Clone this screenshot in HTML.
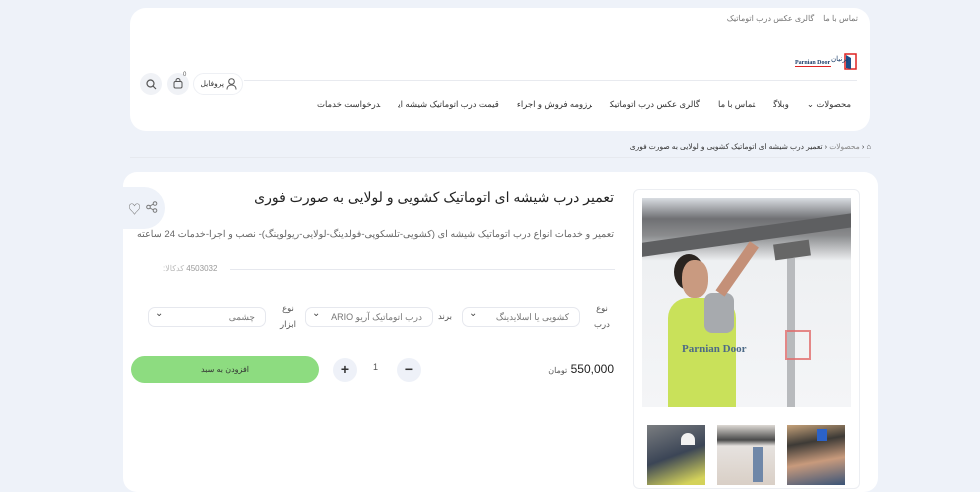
<!DOCTYPE html>
<html lang="fa" dir="rtl"><head><meta charset="utf-8">
<style>
*{box-sizing:border-box;margin:0;padding:0}
body{width:980px;height:480px;overflow:hidden;background:#eef2f9;font-family:"Liberation Sans","Noto Sans CJK SC",sans-serif;color:#333;position:relative}
.a{position:absolute;white-space:nowrap}
.hdr{position:absolute;left:130px;top:8px;width:740px;height:123px;background:#fff;border-radius:16px}
.main{position:absolute;left:123px;top:172px;width:755px;height:320px;background:#fff;border-radius:14px}
.sel{position:absolute;height:20px;border:1px solid #e6e8ee;border-radius:7px;font-size:9px;color:#777;line-height:18px;padding-right:10px}
.sel:after{content:"⌄";position:absolute;left:6px;top:-3px;font-size:10px;color:#444}
.lbl{position:absolute;font-size:8.5px;color:#555;line-height:16px;text-align:center}
.nav span{margin-left:18px}
</style></head><body>
<div class="hdr"></div>
<div class="a" style="right:122px;top:14px;font-size:8px;color:#777">تماس با ما &nbsp;&nbsp; گالری عکس درب اتوماتیک</div>
<!-- logo -->
<div class="a" dir="ltr" style="left:795px;top:52px;width:64px;height:20px;direction:ltr">
<svg width="64" height="20" viewBox="0 0 64 20" direction="ltr"><rect x="50" y="2" width="11" height="15" fill="none" stroke="#d22" stroke-width="1.5"/><path d="M51 3 L56 6 L56 17 L51 16Z" fill="#1d4f8a"/><text x="0" y="12" font-size="6" font-family="Liberation Serif" font-weight="bold" fill="#1d3f6a" direction="ltr">Parnian Door</text><text x="36" y="9" font-size="7" fill="#1d3f6a" font-family="Noto Sans CJK SC">پرنیان</text><rect x="0" y="14" width="36" height="1" fill="#d22"/></svg></div>
<div style="position:absolute;left:244px;top:80px;width:613px;height:1px;background:#e8eaef"></div>
<div class="a" style="left:193px;top:73px;width:50px;height:22px;border:1px solid #eef0f4;border-radius:11px;font-size:7.5px;line-height:20px;padding-right:18px;color:#333">پروفایل
<svg style="position:absolute;right:5px;top:4px" width="11" height="12" viewBox="0 0 11 12"><circle cx="5.5" cy="3.5" r="2.8" fill="none" stroke="#555" stroke-width="1"/><path d="M1 11.5c0-3 2-4.5 4.5-4.5s4.5 1.5 4.5 4.5" fill="none" stroke="#555" stroke-width="1"/></svg></div>
<div class="a" style="left:167px;top:73px;width:22px;height:22px;border-radius:50%;background:#f0f2f6"><svg style="position:absolute;left:6px;top:5px" width="10" height="11" viewBox="0 0 10 11"><rect x="1" y="3.5" width="8" height="6.5" rx="1.5" fill="none" stroke="#555"/><path d="M3 4V2.5a2 2 0 0 1 4 0V4" fill="none" stroke="#555"/></svg></div>
<div class="a" style="left:183px;top:72px;font-size:6px;color:#555">0</div>
<div class="a" style="left:140px;top:73px;width:22px;height:22px;border-radius:50%;background:#f0f2f6"><svg style="position:absolute;left:6px;top:6px" width="11" height="11" viewBox="0 0 11 11"><circle cx="4.5" cy="4.5" r="3.5" fill="none" stroke="#555" stroke-width="1.2"/><path d="M7 7l3 3" stroke="#555" stroke-width="1.2"/></svg></div>
<div class="a nav" style="right:129px;top:99px;font-size:8.5px;color:#333"><span>محصولات ⌄</span><span>وبلاگ</span><span>تماس با ما</span><span>گالری عکس درب اتوماتیک</span><span>رزومه فروش و اجراء</span><span>قیمت درب اتوماتیک شیشه ای</span><span style="margin:0">درخواست خدمات</span></div>
<!-- breadcrumb -->
<div class="a" style="right:109px;top:142px;font-size:7.5px;color:#333">⌂ ‹ <span style="color:#888">محصولات</span> ‹ تعمیر درب شیشه ای اتوماتیک کشویی و لولایی به صورت فوری</div>
<div style="position:absolute;left:130px;top:157px;width:740px;height:1px;background:#e6e9ef"></div>
<div class="main"></div>
<div class="a" style="left:103px;top:187px;width:62px;height:42px;background:#eef2f9;border-radius:0 21px 21px 0"></div>
<div class="a" style="left:128px;top:199px;font-size:13px;color:#777">♡</div>
<svg class="a" style="left:146px;top:201px" width="12" height="12" viewBox="0 0 12 12"><circle cx="9" cy="2.5" r="1.8" fill="none" stroke="#777"/><circle cx="2.5" cy="6" r="1.8" fill="none" stroke="#777"/><circle cx="9" cy="9.5" r="1.8" fill="none" stroke="#777"/><path d="M4 5l3.5-2M4 7l3.5 2" stroke="#777"/></svg>
<div class="a" style="right:366px;top:189px;font-size:14px;color:#222">تعمیر درب شیشه ای اتوماتیک کشویی و لولایی به صورت فوری</div>
<div class="a" style="right:366px;top:229px;font-size:9.6px;color:#666">تعمیر و خدمات انواع درب اتوماتیک شیشه ای (کشویی-تلسکوپی-فولدینگ-لولایی-ریولوینگ)- نصب و اجرا-خدمات 24 ساعته</div>
<div style="position:absolute;left:230px;top:269px;width:385px;height:1px;background:#e6e8ee"></div>
<div class="a" style="left:163px;top:264px;font-size:8px;color:#999">4503032 <span style="color:#bbb">کدکالا:</span></div>
<div class="lbl" style="left:588px;top:300px;width:28px">نوع<br>درب</div>
<div class="sel" style="left:462px;top:307px;width:118px">کشویی یا اسلایدینگ</div>
<div class="lbl" style="left:436px;top:308px;width:18px">برند</div>
<div class="sel" style="left:305px;top:307px;width:128px">درب اتوماتیک آریو ARIO</div>
<div class="lbl" style="left:276px;top:300px;width:24px">نوع<br>ابزار</div>
<div class="sel" style="left:148px;top:307px;width:118px">چشمی</div>
<div class="a" style="left:131px;top:356px;width:188px;height:27px;background:#8ddc80;border-radius:14px;font-size:8px;text-align:center;line-height:27px;color:#333">افزودن به سبد</div>
<div class="a" style="left:333px;top:358px;width:24px;height:24px;border-radius:50%;background:#eef1f8;font-size:14px;text-align:center;line-height:23px;font-weight:bold">+</div>
<div class="a" style="left:373px;top:362px;font-size:9px;color:#555">1</div>
<div class="a" style="left:397px;top:358px;width:24px;height:24px;border-radius:50%;background:#eef1f8;font-size:14px;text-align:center;line-height:23px;font-weight:bold">−</div>
<div class="a" style="right:366px;top:362px;font-size:12px;color:#222">550,000 <span style="font-size:8px;color:#555">تومان</span></div>
<!-- gallery -->
<div class="a" style="left:633px;top:189px;width:227px;height:300px;border:1px solid #eceef2;border-radius:6px"></div>
<div class="a" style="left:642px;top:198px;width:209px;height:209px;overflow:hidden;background:linear-gradient(180deg,#d9dde2 0%,#6f7073 10%,#8b8c8e 18%,#eef0f2 30%,#f4f5f7 100%)">
<div style="position:absolute;left:-5px;top:30px;width:220px;height:14px;background:#5e5f61;transform:rotate(-8deg)"></div>
<div style="position:absolute;left:145px;top:60px;width:8px;height:150px;background:#b8babd"></div>
<div style="position:absolute;left:132px;top:44px;width:36px;height:16px;background:#666;transform:rotate(-8deg)"></div>
<div style="position:absolute;left:26px;top:100px;width:68px;height:110px;border-radius:20px 20px 0 0;background:#c9e15a"></div>
<div style="position:absolute;left:62px;top:95px;width:30px;height:40px;background:#a7aaae;border-radius:8px"></div>
<div style="position:absolute;left:78px;top:90px;width:60px;height:11px;background:#c49078;transform:rotate(-55deg);transform-origin:left center"></div>
<div style="position:absolute;left:32px;top:56px;width:30px;height:36px;border-radius:50%;background:#2a2420"></div>
<div style="position:absolute;left:40px;top:62px;width:26px;height:38px;border-radius:45%;background:#c99a80"></div>
<div class="a" style="left:40px;top:145px;font-family:'Liberation Serif';font-weight:bold;font-size:11px;color:#4d6a86">Parnian Door</div>
<div style="position:absolute;left:143px;top:132px;width:26px;height:30px;border:2px solid #e16b6b;opacity:.8"></div>
</div>
<div class="a" style="left:647px;top:425px;width:58px;height:60px;background:linear-gradient(160deg,#7a7d80,#3b4556 50%,#d4d25a 90%)"><div style="position:absolute;left:34px;top:8px;width:14px;height:12px;border-radius:7px 7px 0 0;background:#f2f2f2"></div></div>
<div class="a" style="left:717px;top:425px;width:58px;height:60px;background:linear-gradient(180deg,#ddd9d4,#4a4a4a 25%,#e6e2df 35%,#d9cfc6)"><div style="position:absolute;left:36px;top:22px;width:10px;height:35px;background:#6f87a8"></div></div>
<div class="a" style="left:787px;top:425px;width:58px;height:60px;background:linear-gradient(170deg,#c6a27a,#3d3a36 30%,#c89a7c 60%,#3a5478)"><div style="position:absolute;left:30px;top:4px;width:10px;height:12px;background:#2b62c8"></div></div>
</body></html>
